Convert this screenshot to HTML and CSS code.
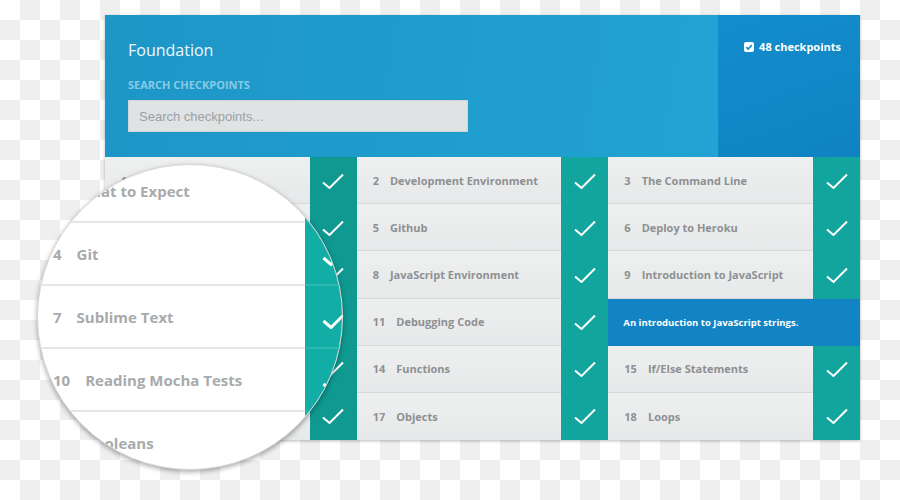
FILE: index.html
```html
<!DOCTYPE html>
<html>
<head>
<meta charset="utf-8">
<link rel="stylesheet" href="styles.css">
</head>
<body>
<div class="stage">
  <div class="panel">
    <header class="header">
      <div class="header-main">
        <h1 class="title">Foundation</h1>
        <div class="search-label">SEARCH CHECKPOINTS</div>
        <input class="search-input" type="text" placeholder="Search checkpoints...">
      </div>
      <div class="header-side">
        <span class="count">
          <svg class="count-icon" viewBox="0 0 10 10" width="10" height="10"><rect x="0" y="0" width="10" height="10" rx="2" fill="#fff"/><polyline points="2.3,5.2 4.2,7 7.8,3" fill="none" stroke="#1287c6" stroke-width="1.6"/></svg>
          48 checkpoints
        </span>
      </div>
    </header>
    <div class="grid">
      <div class="cell col1"><div class="cell-label"><span class="num">1</span>What to Expect</div><div class="cell-check"><svg class="ck" viewBox="0 0 22 16"><polyline points="1,9.5 7.5,15 21,1.5"/></svg></div></div>
      <div class="cell"><div class="cell-label"><span class="num">2</span>Development Environment</div><div class="cell-check"><svg class="ck" viewBox="0 0 22 16"><polyline points="1,9.5 7.5,15 21,1.5"/></svg></div></div>
      <div class="cell"><div class="cell-label"><span class="num">3</span>The Command Line</div><div class="cell-check"><svg class="ck" viewBox="0 0 22 16"><polyline points="1,9.5 7.5,15 21,1.5"/></svg></div></div>

      <div class="cell col1"><div class="cell-label"><span class="num">4</span>Git</div><div class="cell-check"><svg class="ck" viewBox="0 0 22 16"><polyline points="1,9.5 7.5,15 21,1.5"/></svg></div></div>
      <div class="cell"><div class="cell-label"><span class="num">5</span>Github</div><div class="cell-check"><svg class="ck" viewBox="0 0 22 16"><polyline points="1,9.5 7.5,15 21,1.5"/></svg></div></div>
      <div class="cell"><div class="cell-label"><span class="num">6</span>Deploy to Heroku</div><div class="cell-check"><svg class="ck" viewBox="0 0 22 16"><polyline points="1,9.5 7.5,15 21,1.5"/></svg></div></div>

      <div class="cell col1"><div class="cell-label"><span class="num">7</span>Sublime Text</div><div class="cell-check"><svg class="ck" viewBox="0 0 22 16"><polyline points="1,9.5 7.5,15 21,1.5"/></svg></div></div>
      <div class="cell"><div class="cell-label"><span class="num">8</span>JavaScript Environment</div><div class="cell-check"><svg class="ck" viewBox="0 0 22 16"><polyline points="1,9.5 7.5,15 21,1.5"/></svg></div></div>
      <div class="cell"><div class="cell-label"><span class="num">9</span>Introduction to JavaScript</div><div class="cell-check"><svg class="ck" viewBox="0 0 22 16"><polyline points="1,9.5 7.5,15 21,1.5"/></svg></div></div>

      <div class="cell col1"><div class="cell-label"><span class="num">10</span>Reading Mocha Tests</div><div class="cell-check"><svg class="ck" viewBox="0 0 22 16"><polyline points="1,9.5 7.5,15 21,1.5"/></svg></div></div>
      <div class="cell"><div class="cell-label"><span class="num">11</span>Debugging Code</div><div class="cell-check"><svg class="ck" viewBox="0 0 22 16"><polyline points="1,9.5 7.5,15 21,1.5"/></svg></div></div>
      <div class="cell cell-tip">An introduction to JavaScript strings.</div>

      <div class="cell col1"><div class="cell-label"><span class="num">13</span>Booleans</div><div class="cell-check"><svg class="ck" viewBox="0 0 22 16"><polyline points="1,9.5 7.5,15 21,1.5"/></svg></div></div>
      <div class="cell"><div class="cell-label"><span class="num">14</span>Functions</div><div class="cell-check"><svg class="ck" viewBox="0 0 22 16"><polyline points="1,9.5 7.5,15 21,1.5"/></svg></div></div>
      <div class="cell"><div class="cell-label"><span class="num">15</span>If/Else Statements</div><div class="cell-check"><svg class="ck" viewBox="0 0 22 16"><polyline points="1,9.5 7.5,15 21,1.5"/></svg></div></div>

      <div class="cell col1 last"><div class="cell-label"><span class="num">16</span>Arrays</div><div class="cell-check"><svg class="ck" viewBox="0 0 22 16"><polyline points="1,9.5 7.5,15 21,1.5"/></svg></div></div>
      <div class="cell last"><div class="cell-label"><span class="num">17</span>Objects</div><div class="cell-check"><svg class="ck" viewBox="0 0 22 16"><polyline points="1,9.5 7.5,15 21,1.5"/></svg></div></div>
      <div class="cell last"><div class="cell-label"><span class="num">18</span>Loops</div><div class="cell-check"><svg class="ck" viewBox="0 0 22 16"><polyline points="1,9.5 7.5,15 21,1.5"/></svg></div></div>
    </div>
  </div>

  <div class="lens">
    <div class="lens-rows">
      <div class="lens-row"><div class="lens-label"><span class="lnum">1</span>What to Expect</div><div class="lens-strip"><svg class="lck" viewBox="0 0 26 19"><polyline points="1.5,11 9,17.5 24.5,2"/></svg></div></div>
      <div class="lens-row"><div class="lens-label"><span class="lnum">4</span>Git</div><div class="lens-strip"><svg class="lck" viewBox="0 0 26 19"><polyline points="1.5,11 9,17.5 24.5,2"/></svg></div></div>
      <div class="lens-row"><div class="lens-label"><span class="lnum">7</span>Sublime Text</div><div class="lens-strip"><svg class="lck" viewBox="0 0 26 19"><polyline points="1.5,11 9,17.5 24.5,2"/></svg></div></div>
      <div class="lens-row"><div class="lens-label"><span class="lnum">10</span>Reading Mocha Tests</div><div class="lens-strip"><svg class="lck" viewBox="0 0 26 19"><polyline points="1.5,11 9,17.5 24.5,2"/></svg></div></div>
      <div class="lens-row"><div class="lens-label"><span class="lnum">13</span>Booleans</div><div class="lens-strip"><svg class="lck" viewBox="0 0 26 19"><polyline points="1.5,11 9,17.5 24.5,2"/></svg></div></div>
    </div>
  </div>
</div>
</body>
</html>
```
FILE: styles.css
```css
html, body {
  margin: 0;
  padding: 0;
}
body {
  background-color: #ffffff;
  background-image: conic-gradient(#efefef 25%, transparent 0 50%, #efefef 0 75%, transparent 0);
  background-size: 40px 40px;
  font-family: "Open Sans", "DejaVu Sans", sans-serif;
}
.stage {
  position: relative;
  width: 900px;
  height: 500px;
  padding: 15px 0 0 105px;
  box-sizing: border-box;
  overflow: hidden;
}
.panel {
  width: 755px;
  box-shadow: 0 1px 3px rgba(0, 0, 0, 0.28);
}
.header {
  display: flex;
  height: 142px;
}
.header-main {
  flex: 1;
  background: linear-gradient(100deg, #1d96c6 0%, #22a3d3 100%);
  padding: 25px 0 0 23px;
}
.title {
  margin: 0;
  font-weight: 400;
  font-size: 16px;
  line-height: 20px;
  color: #eef8fc;
}
.search-label {
  margin-top: 18px;
  font-size: 11px;
  line-height: 14px;
  font-weight: 700;
  color: #86cbe7;
}
.search-input {
  display: block;
  margin-top: 8px;
  width: 340px;
  height: 32px;
  box-sizing: border-box;
  border: 1px solid #cfd7db;
  background: #e0e3e4;
  padding: 0 10px;
  font-family: "Liberation Sans", Arial, sans-serif;
  font-size: 13px;
  color: #9a9fa2;
  outline: none;
}
.search-input::placeholder {
  color: #9ca0a3;
}
.header-side {
  width: 142px;
  background: linear-gradient(160deg, #138dcc, #0f83c2);
  display: flex;
  justify-content: flex-end;
  align-items: flex-start;
  padding: 24px 19px 0 0;
  box-sizing: border-box;
}
.count {
  display: flex;
  align-items: center;
  gap: 5px;
  font-size: 11px;
  font-weight: 700;
  line-height: 16px;
  color: #ffffff;
}
.count-icon {
  display: block;
}
.grid {
  display: grid;
  grid-template-columns: repeat(3, 1fr);
  grid-template-rows: repeat(6, 1fr);
  height: 283px;
}
.cell {
  display: flex;
  min-width: 0;
}
.cell-label {
  flex: 1;
  display: flex;
  align-items: center;
  padding-left: 16px;
  border-bottom: 1px solid #d6d9db;
  background: linear-gradient(180deg, #eef0f0, #e6e8e9);
  font-size: 11px;
  font-weight: 700;
  color: #8d9092;
  white-space: nowrap;
  overflow: hidden;
}
.last .cell-label {
  border-bottom: none;
}
.num {
  margin-right: 11px;
}
.cell-check {
  width: 47px;
  flex: none;
  background: #11a59d;
  display: flex;
  align-items: center;
  justify-content: center;
}
.col1 .cell-check {
  background: #0f9991;
}
.ck {
  width: 22px;
  height: 16px;
  fill: none;
  stroke: #ffffff;
  stroke-width: 2;
}
.cell-tip {
  background: #1284c4;
  color: #ffffff;
  font-size: 9.5px;
  font-weight: 700;
  padding-left: 15px;
  align-items: center;
  white-space: nowrap;
}
.lens {
  position: absolute;
  left: 37px;
  top: 164px;
  width: 306px;
  height: 306px;
  box-sizing: border-box;
  border-radius: 50%;
  border: 1px solid #d8d8d8;
  background: #ffffff;
  overflow: hidden;
  box-shadow: 0 2px 5px rgba(0, 0, 0, 0.35);
}
.lens-rows {
  margin-top: -5px;
}
.lens-row {
  display: flex;
  height: 63px;
}
.lens-label {
  width: 252px;
  flex: none;
  display: flex;
  align-items: center;
  padding-left: 15px;
  box-sizing: content-box;
  border-bottom: 2px solid #e6e6e6;
  font-size: 15px;
  font-weight: 700;
  color: #a8aaab;
  white-space: nowrap;
}
.lnum {
  margin-right: 15px;
}
.lens-strip {
  width: 80px;
  flex: none;
  background: #12aea6;
  border-bottom: 2px solid #2cb8b1;
  display: flex;
  align-items: center;
  padding: 6px 0 0 17px;
  box-sizing: border-box;
}
.lck {
  width: 26px;
  height: 19px;
  fill: none;
  stroke: #ffffff;
  stroke-width: 3;
}
```
